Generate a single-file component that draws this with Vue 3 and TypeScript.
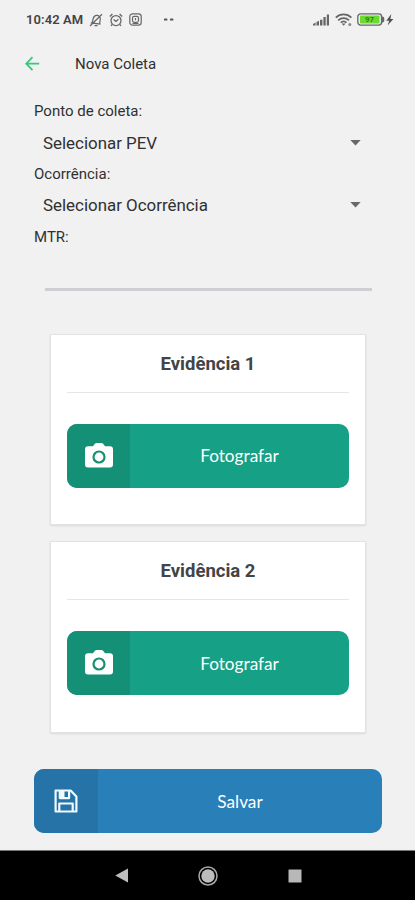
<script setup lang="ts">
interface SelectField {
  label: string
  value: string
}

const fields: SelectField[] = [
  { label: 'Ponto de coleta:', value: 'Selecionar PEV' },
  { label: 'Ocorrência:', value: 'Selecionar Ocorrência' },
]

const evidences: string[] = ['Evidência 1', 'Evidência 2']
</script>

<template>
  <div class="screen">
    <header class="status">
      <span class="clock">10:42 AM</span>
      <svg class="mute" width="14" height="14" viewBox="0 0 14 14" fill="none" stroke="#666" stroke-width="1.2">
        <path d="M3.200 9.800 4.200 5.500C4.800 3.200 6.500 2 8.500 2.400s3.200 2.300 2.700 4.600l-.7 3.800M1.800 9.900l9.700 1.300M5.500 12.600h3M1 13 13 1.200" />
      </svg>
      <svg class="alarm" width="14" height="14" viewBox="0 0 14 14" fill="none" stroke="#666" stroke-width="1.300">
        <circle cx="7" cy="7.600" r="5" />
        <path d="M.8 3.500 3.400 1M13.200 3.500 10.600 1M4.600 6.500l2.300 2 2.500-2.300M3.200 11.500l-1.200 1.400M10.800 11.500l1.200 1.400" />
      </svg>
      <svg class="app" width="13" height="13" viewBox="0 0 13 13" fill="none" stroke="#686868" stroke-width="1.200">
        <rect x=".8" y=".8" width="11.400" height="11.400" rx="2.700" />
        <rect x="3.500" y="3.300" width="6" height="6" rx="1.800" />
        <path d="M6.500 5v2.200M3.500 10.500h6" />
      </svg>
      <svg class="dots" width="10" height="4" viewBox="0 0 10 4" fill="#555">
        <rect x="0" y=".6" width="3.400" height="2" rx=".7" /><rect x="6" y=".6" width="3.400" height="2" rx=".7" />
      </svg>
      <svg class="signal" width="17" height="12" viewBox="0 0 17 12" fill="#666">
        <path d="M0 11.500V10l2.600-1.500v3zM3.500 11.500V8L6 6.800v4.700zM7 11.500V5.700h2.400v5.800zM10.400 3h2.300v8.500h-2.300zM13.800.5H16v11h-2.200z" />
      </svg>
      <svg class="wifi" width="18" height="14" viewBox="0 0 18 14" fill="none" stroke="#666" stroke-width="1.700">
        <path d="M.8 4.600c4.400-4.200 11.200-4.200 15.600 0M3.200 7.300c3.100-2.900 7.700-2.900 10.800 0M5.700 9.700c1.700-1.500 4.100-1.500 5.800 0" />
        <path d="M6.700 10.600h3.800L8.600 12.700z" fill="#666" stroke="none" />
        <circle cx="14.800" cy="11.600" r="1.500" fill="#888" stroke="none" />
      </svg>
      <svg class="battery" width="28" height="13" viewBox="0 0 28 13">
        <rect x=".8" y=".9" width="23.800" height="11.200" rx="2.800" fill="#e8f3e2" stroke="#666" stroke-width="1.300" />
        <path d="M25 3.500c2 0 2.300 1 2.300 3s-.3 3-2.300 3z" fill="#666" />
        <rect x="3" y="2.600" width="19.500" height="7.800" rx="1" fill="#6bdb32" />
        <text x="12.500" y="9.300" text-anchor="middle">97</text>
      </svg>
      <svg class="bolt" width="8" height="12" viewBox="0 0 8 12" fill="#505050">
        <path d="M5.300 0 .3 6.700h2.900L1.600 11.600 7.400 5H4.400z" />
      </svg>
    </header>

    <nav class="toolbar">
      <svg width="16" height="16" viewBox="0 0 16 16" fill="none" stroke="#38c87a" stroke-width="1.800">
        <path d="M7.500 1.200 1.200 7.700l6.300 6.500M1.400 7.700h12.800" />
      </svg>
      <h1>Nova Coleta</h1>
    </nav>

    <main>
      <section class="form">
        <template v-for="field in fields" :key="field.label">
          <label>{{ field.label }}</label>
          <div class="select">
            <span>{{ field.value }}</span>
            <svg width="11" height="6" viewBox="0 0 11 6"><path d="M.3 0h10.400L5.500 5.600z" fill="#686868" /></svg>
          </div>
        </template>
        <label>MTR:</label>
        <div class="input"></div>
      </section>

      <section class="cards">
        <article v-for="title in evidences" :key="title" class="card">
          <h2>{{ title }}</h2>
          <button class="action photo" type="button">
            <span class="icon">
              <svg width="28" height="25" viewBox="0 0 28 25">
                <path d="M3 3.200h5l1.700-2.100Q10.500 0 11.800 0h4.400q1.300 0 2.100 1.100L20 3.200h5q3 0 3 3v15.300q0 3-3 3H3q-3 0-3-3V6.200q0-3 3-3z" fill="#fff" />
                <circle cx="14" cy="14" r="5.500" fill="none" stroke="#16906f" stroke-width="2.200" />
              </svg>
            </span>
            <span class="caption">Fotografar</span>
          </button>
        </article>
      </section>

      <button class="action save" type="button">
        <span class="icon">
          <svg width="24" height="24" viewBox="0 0 24 24" fill="none" stroke="#f0faff" stroke-width="2.200" stroke-linejoin="round">
            <path d="M1.600 1.500h15l5.800 6v15H1.600z" />
            <path d="M5.800 1.800v7.300h9.300V1.800M5.300 22v-7.500h13.400V22" />
            <path d="M6.500 2h4v6h-4z" fill="#f0faff" stroke="none" />
          </svg>
        </span>
        <span class="caption">Salvar</span>
      </button>
    </main>

    <footer class="system">
      <svg width="13" height="15" viewBox="0 0 13 15"><path d="M13 .5v14L.3 7.500z" fill="#bdbdbd" /></svg>
      <svg width="20" height="20" viewBox="0 0 20 20">
        <circle cx="10" cy="10" r="9" fill="none" stroke="#aaa" stroke-width="1.500" />
        <circle cx="10" cy="10" r="6.700" fill="#bdbdbd" />
      </svg>
      <svg width="14" height="14" viewBox="0 0 14 14"><rect x=".5" y=".5" width="13" height="13" rx=".5" fill="#b8b8b8" /></svg>
    </footer>
  </div>
</template>

<style>
body {
  background: #f1f1f1;
}
</style>

<style scoped>
.screen {
  box-sizing: border-box;
  width: 415px;
  height: 900px;
  display: flex;
  flex-direction: column;
  overflow: hidden;
  background: #f1f1f1;
  color: #303030;
  font-family: Roboto, sans-serif;
}

svg {
  display: block;
  flex: none;
}

.status {
  height: 39px;
  box-sizing: border-box;
  padding-left: 26px;
  display: flex;
  align-items: center;
}

.clock {
  width: 63px;
  font-size: 13px;
  font-weight: 600;
  letter-spacing: 0.1px;
  color: #444;
  white-space: nowrap;
}

.alarm {
  margin-left: 6px;
}

.app {
  margin-left: 6px;
}

.dots {
  margin-left: 22px;
}

.signal {
  margin-left: 139px;
}

.wifi {
  margin-left: 5px;
}

.battery {
  margin-left: 4px;
}

.battery text {
  font: 700 8px Roboto, sans-serif;
  fill: #39801f;
}

.bolt {
  margin-left: 1px;
}

.toolbar {
  height: 50px;
  padding-left: 25px;
  display: flex;
  align-items: center;
  gap: 34px;
}

h1 {
  margin: 0;
  font-size: 15px;
  font-weight: 400;
}

main {
  flex: 1;
  padding: 11.4px 33px 0 34px;
}

.form {
  display: flex;
  flex-direction: column;
}

label {
  height: 22px;
  line-height: 22px;
  font-size: 15px;
}

.select {
  height: 40.6px;
  padding: 0 21px 0 9px;
  display: flex;
  align-items: center;
  justify-content: space-between;
  font-size: 16.9px;
}

.input {
  height: 40px;
  margin: 0 10px 0 11px;
  border-bottom: 3px solid #cdcfd3;
}

.cards {
  display: flex;
  flex-direction: column;
  gap: 16px;
  margin: 43px 16px 36.6px;
}

.card {
  box-sizing: border-box;
  height: 191.5px;
  padding: 0 16px;
  border: 1px solid #e2e3e3;
  background: #fff;
  box-shadow: 0 1px 2px rgba(0, 0, 0, 0.1);
}

h2 {
  height: 57px;
  margin: 0 0 31px;
  border-bottom: 1px solid #e5e6e8;
  line-height: 59px;
  font-size: 18.5px;
  font-weight: 700;
  text-align: center;
  color: #424447;
}

.action {
  width: 100%;
  height: 64px;
  padding: 0;
  border: 0;
  border-radius: 10px;
  overflow: hidden;
  display: flex;
  color: #fff;
  font-family: Lato, sans-serif;
  font-size: 17.2px;
}

.icon {
  width: 64px;
  height: 100%;
  display: flex;
  align-items: center;
  justify-content: center;
}

.caption {
  flex: 1;
  align-self: center;
  text-align: center;
}

.photo {
  background: #16a085;
}

.photo .icon {
  width: 63px;
  padding-bottom: 1px;
  box-sizing: border-box;
  background: #149077;
}

.save {
  background: #2980b9;
}

.save .icon {
  background: #2573a7;
}

.system {
  height: 49px;
  border-top: 1px solid #777;
  background: #000;
  display: flex;
  align-items: center;
  justify-content: center;
  gap: 70px;
  padding-left: 1px;
}
</style>
